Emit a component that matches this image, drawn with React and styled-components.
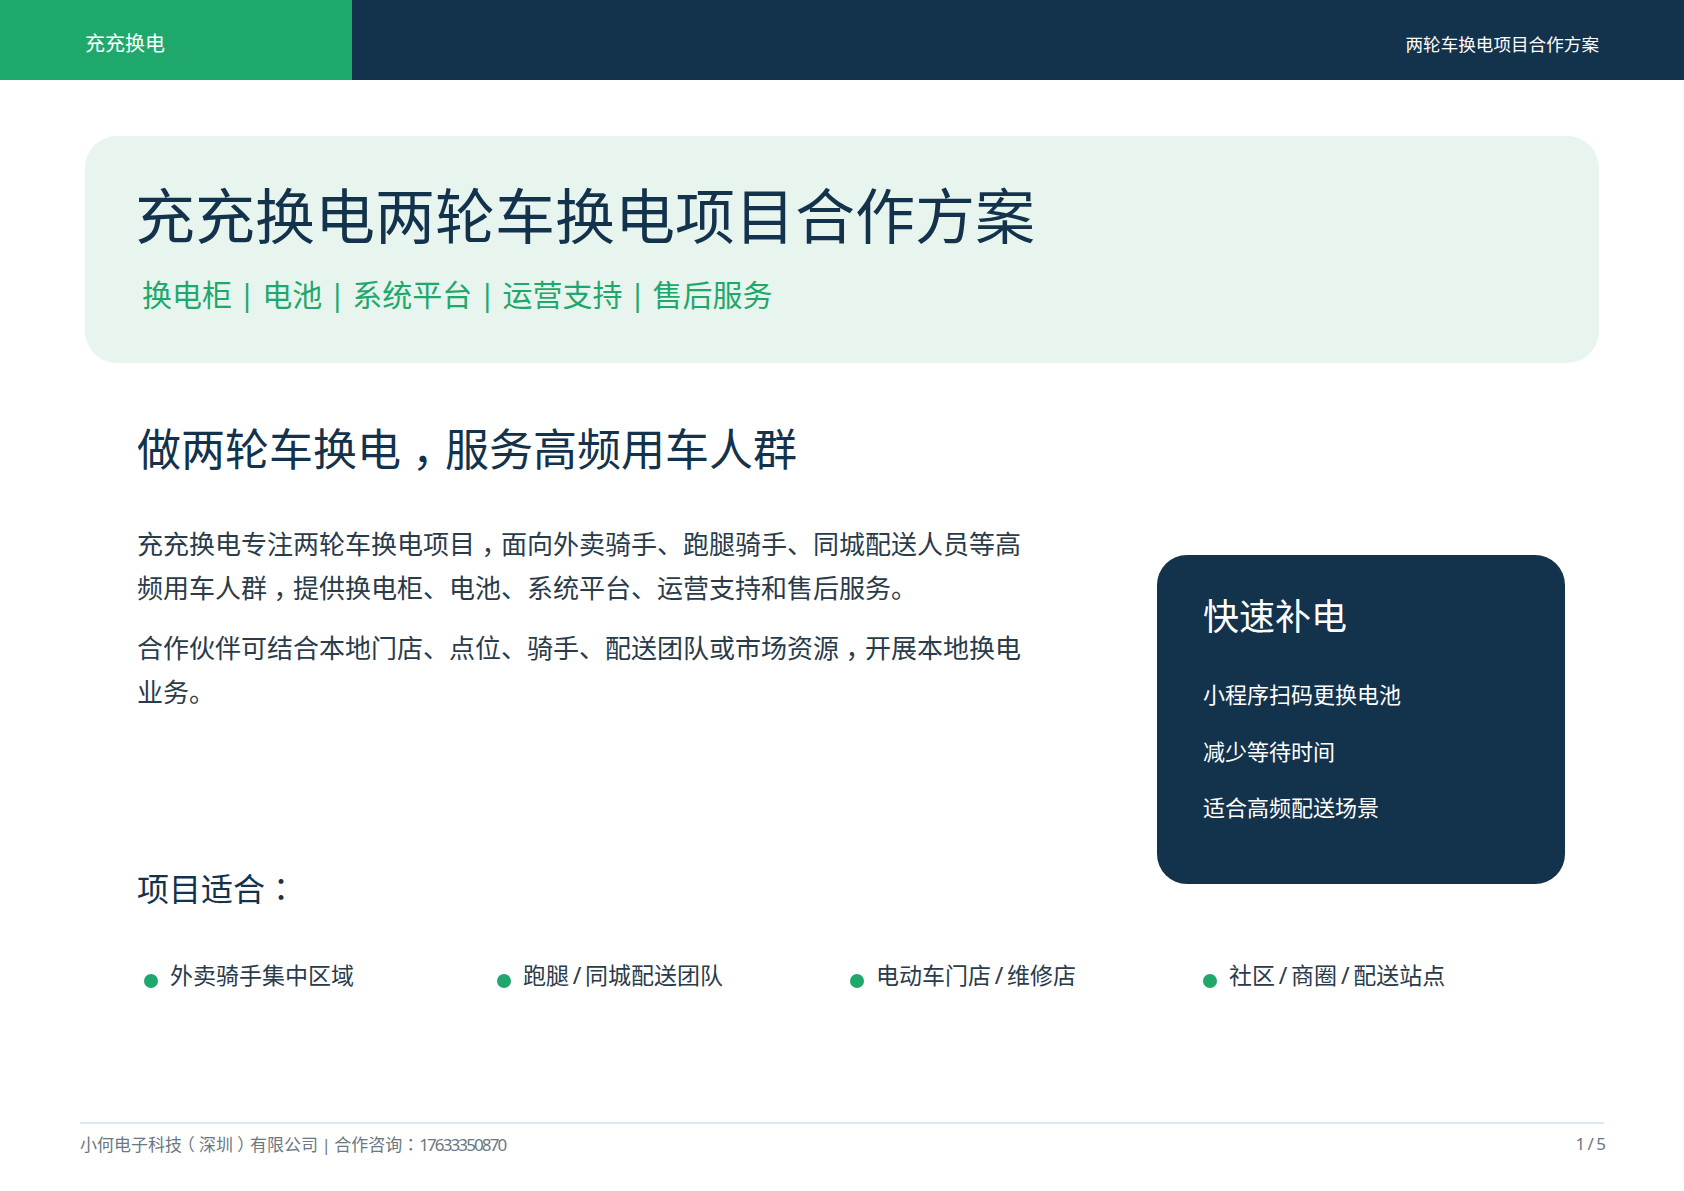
import styled, { createGlobalStyle } from "styled-components";

const GlobalStyle = createGlobalStyle`
  html, body {
    margin: 0;
    padding: 0;
    background: #fff;
  }
  body {
    font-family: "Noto Sans", "Noto Sans CJK SC", sans-serif;
    color: #13324b;
  }
`;

const Page = styled.div`
  width: 1684px;
  height: 1191px;
  display: flex;
  flex-direction: column;
  overflow: hidden;
`;

const TopBar = styled.header`
  height: 80px;
  flex: none;
  display: flex;
  background: #13324b;
  color: #fff;
`;

const Brand = styled.div`
  width: 352px;
  padding-left: 85px;
  box-sizing: border-box;
  background: #1fa86b;
  font-size: 20px;
  line-height: 88px;
`;

const DocTitle = styled.div`
  margin-left: auto;
  padding-right: 85px;
  font-size: 17.6px;
  line-height: 89px;
`;

const Hero = styled.section`
  margin: 56px 85px 0;
  height: 227px;
  padding: 44px 50px 0;
  box-sizing: border-box;
  background: #e8f5ee;
  border-radius: 32px;
`;

const HeroTitle = styled.h1`
  margin: 0;
  font-size: 60px;
  font-weight: 400;
  line-height: 72px;
  color: #13324b;
`;

const HeroSub = styled.p`
  margin: 23px 0 0 7px;
  font-size: 30px;
  line-height: 40px;
  word-spacing: -1px;
  color: #1fa86b;
`;

const Intro = styled.div`
  display: flex;
  padding-left: 137px;
`;

const IntroText = styled.div`
  width: 890px;
`;

const Heading = styled.h2`
  margin: 57px 0 0;
  font-size: 44px;
  font-weight: 400;
  line-height: 58px;
  color: #13324b;
`;

const Para = styled.p`
  margin: ${(p) => p.$gap}px 0 0;
  font-size: 26px;
  line-height: 44px;
  color: #2a3b4a;
`;

const Mark = styled.span`
  font-feature-settings: "halt";
  padding: 0 0.25em;
`;

const Colon = styled.span`
  font-family: "Noto Sans CJK TC", sans-serif;
`;

const SubHeading = styled.h3`
  margin: 151px 0 0;
  font-size: 32px;
  font-weight: 400;
  line-height: 44px;
  color: #13324b;
`;

const SideCard = styled.aside`
  width: 408px;
  height: 329px;
  margin: 192px 0 0 130px;
  padding: 38px 46px 0;
  box-sizing: border-box;
  background: #13324b;
  border-radius: 30px;
  color: #fff;
`;

const CardTitle = styled.h3`
  margin: 0 0 38px;
  font-size: 36px;
  font-weight: 400;
  line-height: 48px;
`;

const CardItem = styled.p`
  margin: 0 0 26.5px;
  font-size: 22px;
  line-height: 30px;
`;

const Audience = styled.ul`
  list-style: none;
  margin: 48px 0 0;
  padding: 0 0 0 144px;
  display: grid;
  grid-template-columns: repeat(4, 353px);
`;

const AudienceItem = styled.li`
  display: flex;
  align-items: center;
  gap: 12px;
  font-size: 23px;
  line-height: 32px;
  word-spacing: -2.2px;
  color: #2a3b4a;
  white-space: nowrap;

  &::before {
    content: "";
    flex: none;
    width: 14px;
    height: 14px;
    margin-top: 11px;
    border-radius: 50%;
    background: #1fa86b;
  }
`;

const Footer = styled.footer`
  margin: auto 80px 0;
  height: 69px;
  padding-top: 8px;
  flex: none;
  display: flex;
  justify-content: space-between;
  align-items: flex-start;
  border-top: 2px solid #dfe8f0;
  box-sizing: border-box;
  font-size: 17px;
  line-height: 24px;
  word-spacing: -1px;
  color: #6b7782;
`;

const PageNo = styled.span`
  word-spacing: -2px;
  margin-right: -2px;
`;

const Phone = styled.span`
  letter-spacing: -1.9px;
`;

const audience = [
  "外卖骑手集中区域",
  "跑腿 / 同城配送团队",
  "电动车门店 / 维修店",
  "社区 / 商圈 / 配送站点",
];

const quick = ["小程序扫码更换电池", "减少等待时间", "适合高频配送场景"];

export default function App() {
  return (
    <Page>
      <GlobalStyle />
      <TopBar>
        <Brand>充充换电</Brand>
        <DocTitle>两轮车换电项目合作方案</DocTitle>
      </TopBar>

      <Hero>
        <HeroTitle>充充换电两轮车换电项目合作方案</HeroTitle>
        <HeroSub>换电柜 | 电池 | 系统平台 | 运营支持 | 售后服务</HeroSub>
      </Hero>

      <Intro>
        <IntroText>
          <Heading>
            做两轮车换电<Mark>，</Mark>服务高频用车人群
          </Heading>
          <Para $gap={44}>
            充充换电专注两轮车换电项目<Mark>，</Mark>面向外卖骑手、跑腿骑手、同城配送人员等高频用车人群<Mark>，</Mark>提供换电柜、电池、系统平台、运营支持和售后服务。
          </Para>
          <Para $gap={16}>
            合作伙伴可结合本地门店、点位、骑手、配送团队或市场资源<Mark>，</Mark>开展本地换电业务。
          </Para>
          <SubHeading>
            项目适合<Colon>：</Colon>
          </SubHeading>
        </IntroText>
        <SideCard>
          <CardTitle>快速补电</CardTitle>
          {quick.map((item) => (
            <CardItem key={item}>{item}</CardItem>
          ))}
        </SideCard>
      </Intro>

      <Audience>
        {audience.map((item) => (
          <AudienceItem key={item}>{item}</AudienceItem>
        ))}
      </Audience>

      <Footer>
        <span>
          小何电子科技<Mark>（</Mark>深圳<Mark>）</Mark>有限公司 | 合作咨询<Colon>：</Colon>
          <Phone>17633350870</Phone>
        </span>
        <PageNo>1 / 5</PageNo>
      </Footer>
    </Page>
  );
}
